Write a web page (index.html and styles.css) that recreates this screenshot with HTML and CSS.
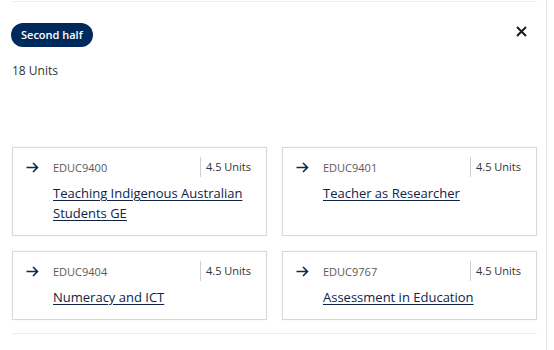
FILE: index.html
```html
<!DOCTYPE html>
<html lang="en">
  <head>
    <meta charset="UTF-8" />
    <meta name="viewport" content="width=device-width, initial-scale=1.0" />
    <title>Second half</title>
    <link rel="stylesheet" href="styles.css">
  </head>
  <body class="page">
    <div class="panel">
      <div class="panel-head">
        <span class="badge">Second half</span>
        <button class="close-btn" aria-label="Close">
          <svg width="11" height="11" viewBox="0 0 11 11">
            <path d="M1 1 L10 10 M10 1 L1 10" stroke="#1d1d1d" stroke-width="2" fill="none" />
          </svg>
        </button>
      </div>
      <p class="total">18 Units</p>

      <div class="course-grid">
        <div class="course-card">
          <div class="course-top">
            <svg class="arrow" width="13" height="11" viewBox="0 0 13 11">
              <path d="M0.5 5.5 H11.5 M7 1 L11.5 5.5 L7 10" stroke="#0b2a4f" stroke-width="1.6" fill="none" />
            </svg>
            <span class="code">EDUC9400</span>
            <span class="units">4.5 Units</span>
          </div>
          <a href="#" class="course-title">Teaching Indigenous Australian Students GE</a>
        </div>

        <div class="course-card">
          <div class="course-top">
            <svg class="arrow" width="13" height="11" viewBox="0 0 13 11">
              <path d="M0.5 5.5 H11.5 M7 1 L11.5 5.5 L7 10" stroke="#0b2a4f" stroke-width="1.6" fill="none" />
            </svg>
            <span class="code">EDUC9401</span>
            <span class="units">4.5 Units</span>
          </div>
          <a href="#" class="course-title">Teacher as Researcher</a>
        </div>

        <div class="course-card">
          <div class="course-top">
            <svg class="arrow" width="13" height="11" viewBox="0 0 13 11">
              <path d="M0.5 5.5 H11.5 M7 1 L11.5 5.5 L7 10" stroke="#0b2a4f" stroke-width="1.6" fill="none" />
            </svg>
            <span class="code">EDUC9404</span>
            <span class="units">4.5 Units</span>
          </div>
          <a href="#" class="course-title">Numeracy and ICT</a>
        </div>

        <div class="course-card">
          <div class="course-top">
            <svg class="arrow" width="13" height="11" viewBox="0 0 13 11">
              <path d="M0.5 5.5 H11.5 M7 1 L11.5 5.5 L7 10" stroke="#0b2a4f" stroke-width="1.6" fill="none" />
            </svg>
            <span class="code">EDUC9767</span>
            <span class="units">4.5 Units</span>
          </div>
          <a href="#" class="course-title">Assessment in Education</a>
        </div>
      </div>
    </div>
  </body>
</html>
```

FILE: styles.css
```css
html,
body {
  margin: 0;
  padding: 0;
}

.page {
  width: 546px;
  height: 350px;
  border-right: 1px solid #e6e6e6;
  background-color: white;
  font-family: "Open Sans", "Noto Sans", sans-serif;
  color: #2b2b2b;
  overflow: hidden;
}

.panel {
  margin: 1px 9px 0 12px;
  padding-top: 21px;
  border-top: 1px solid #ececec;
  border-bottom: 1px solid #ececec;
  padding-bottom: 13px;
}

.panel-head {
  display: flex;
  justify-content: space-between;
  align-items: center;
  height: 24px;
  margin-left: -1px;
}

.badge {
  display: inline-block;
  height: 24px;
  line-height: 24px;
  padding: 0 10px;
  border-radius: 12px;
  background-color: #002a5c;
  color: white;
  font-size: 11px;
  font-weight: 600;
}

.close-btn {
  border: none;
  background: none;
  padding: 0;
  margin-right: 10px;
  margin-top: -8px;
  cursor: pointer;
  display: flex;
}

.total {
  margin: 16px 0 0;
  font-size: 12px;
  line-height: 16px;
  color: #333;
}

.course-grid {
  display: grid;
  grid-template-columns: 1fr 1fr;
  gap: 15px 15px;
  margin-top: 68px;
}

.course-card {
  border: 1px solid #d9d9d9;
  box-shadow: 0 0 2px 0 rgba(0, 0, 0, 0.06);
  padding: 9px 15px 12px 13px;
}

.course-top {
  display: flex;
  align-items: center;
  height: 20px;
}

.arrow {
  flex: none;
  margin-right: 14px;
}

.code {
  flex: 1;
  font-size: 11px;
  color: #5a5a5a;
}

.units {
  border-left: 1px solid #cfcfcf;
  padding-left: 5px;
  line-height: 20px;
  font-size: 11px;
  color: #333;
}

.course-title {
  display: block;
  margin: 6px 0 0 27px;
  font-size: 13px;
  line-height: 20px;
  color: #0e2346;
  text-decoration: underline;
  text-underline-offset: 2px;
}
```
